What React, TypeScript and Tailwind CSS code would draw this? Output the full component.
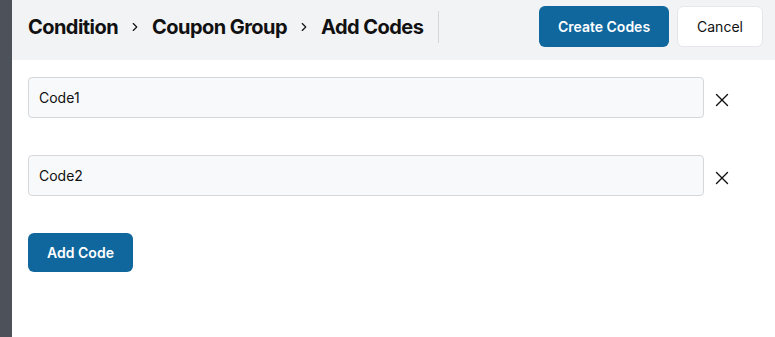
import { ChevronRight, X } from "lucide-react";

const codes = ["Code1", "Code2"];

export default function App() {
    return (
        <div className="flex h-[337px] w-[775px] overflow-hidden bg-white font-['Inter',sans-serif]">
            <div className="w-[12px] shrink-0 bg-[#4c515a]" />
            <div className="flex flex-1 flex-col">
                <div className="flex h-[60px] items-start bg-[#f2f3f5] pl-[16px] pr-[12px] pt-[6px]">
                    <div className="flex h-[41px] items-center text-[20px] font-bold tracking-[-0.55px] text-[#111]">
                        <span>Condition</span>
                        <ChevronRight className="mx-[10px]" size={14} strokeWidth={2} />
                        <span>Coupon Group</span>
                        <ChevronRight className="mx-[10px]" size={14} strokeWidth={2} />
                        <span>Add Codes</span>
                    </div>
                    <div className="ml-[15px] mt-[5px] h-[32px] w-px bg-[#d4d6da]" />
                    <div className="ml-auto flex gap-2">
                        <button className="h-[41px] w-[130px] rounded-[6px] bg-[#10679e] text-[14px] font-semibold text-white">
                            Create Codes
                        </button>
                        <button className="h-[41px] w-[86px] rounded-[6px] border border-[#e5e7eb] bg-white text-[14px] text-[#111]">
                            Cancel
                        </button>
                    </div>
                </div>
                <div className="flex flex-col gap-[37px] pl-[16px] pt-[17px]">
                    {codes.map(code => (
                        <div key={code} className="flex items-center">
                            <div className="flex h-[41px] w-[676px] items-center rounded-[4px] border border-[#d5d7dc] bg-[#f8f9fb] px-[10px] text-[14px] text-[#111]">
                                {code}
                            </div>
                            <X className="ml-[7px] mt-[4px] text-[#111]" size={22} strokeWidth={1.5} />
                        </div>
                    ))}
                </div>
                <div className="pl-[16px] pt-[37px]">
                    <button className="h-[39px] w-[105px] rounded-[6px] bg-[#10679e] text-[14px] font-semibold text-white">
                        Add Code
                    </button>
                </div>
            </div>
        </div>
    );
}
